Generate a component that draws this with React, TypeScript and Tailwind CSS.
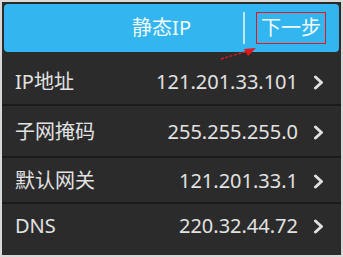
const font = { fontFamily: '"Noto Sans", "Noto Sans CJK SC", sans-serif' }

const rows = [
  { label: "IP地址", value: "121.201.33.101", h: "h-[52px]", pad: "pt-[6px]" },
  { label: "子网掩码", value: "255.255.255.0", h: "h-[52px]", pad: "pt-[2px]" },
  { label: "默认网关", value: "121.201.33.1", h: "h-[46px]", pad: "pt-[2px]" },
  { label: "DNS", value: "220.32.44.72", h: "flex-1", pad: "pb-[7px]" },
]

function Chevron() {
  return (
    <svg width="11" height="15" viewBox="0 0 11 15" className="shrink-0">
      <polyline points="2.5,2 8.5,7.5 2.5,13" fill="none" stroke="#e0e0e0" strokeWidth="3" strokeLinejoin="round" strokeLinecap="round" />
    </svg>
  )
}

export default function App() {
  return (
    <div
      className="relative flex h-[257px] w-[343px] flex-col border-2 border-[#d9d9d9] bg-[#2b2b2b]"
      style={font}
    >
      {/* header */}
      <div className="p-[2px]">
        <div className="flex h-[48px] items-center justify-end rounded-[4px] bg-[#33b5ef] pr-[13px]">
          <span className="mr-[52px] text-[20px] leading-none text-[#f2faff]">静态IP</span>
          <div className="h-[32px] w-[2px] bg-[#bfe8fb]" />
          <div className="ml-[11px] flex h-[32px] w-[70px] items-center justify-center border border-[#e3171c] text-[20px] leading-none text-[#f4fbff]">
            下一步
          </div>
        </div>
      </div>

      {/* rows */}
      {rows.map((r, i) => (
        <div
          key={r.label}
          className={`flex ${r.h} items-center ${r.pad} pl-[13px] pr-[17px] ${i < rows.length - 1 ? "border-b-2 border-[#1a1a1a]" : ""}`}
        >
          <span className="text-[20px] leading-none text-[#e2e2e2]">{r.label}</span>
          <span className="ml-auto text-[20px] leading-none text-[#e2e2e2]">{r.value}</span>
          <div className="ml-[15px]">
            <Chevron />
          </div>
        </div>
      ))}

      {/* red annotation arrow */}
      <svg className="absolute left-[216px] top-[40px]" width="44" height="22" viewBox="0 0 44 22">
        <line x1="3" y1="17" x2="30" y2="9" stroke="#e3171c" strokeWidth="1.4" strokeDasharray="3 1.5" />
        <polygon points="38,6 26,7 30,14" fill="#e3171c" />
      </svg>
    </div>
  )
}
